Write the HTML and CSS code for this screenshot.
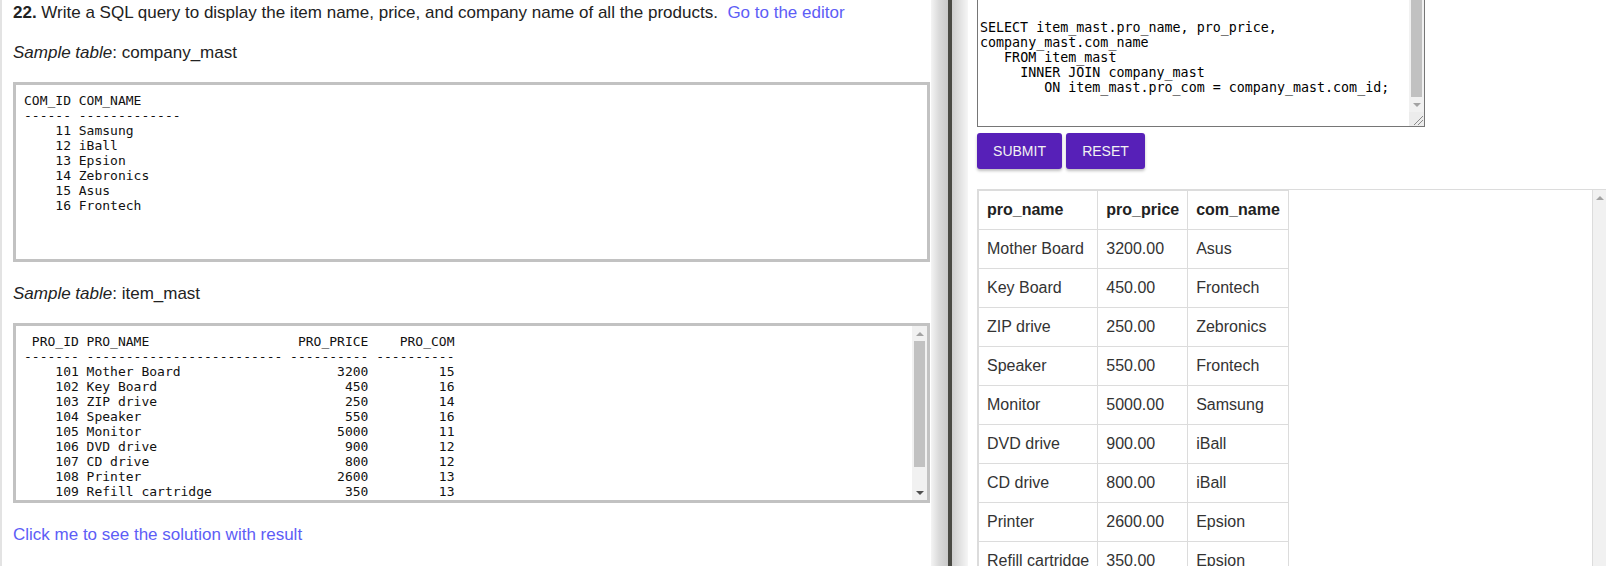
FILE: index.html
```html
<!DOCTYPE html>
<html>
<head>
<meta charset="utf-8">
<link rel="stylesheet" href="styles.css">
</head>
<body>
<div class="page">
  <section class="left">
    <p class="q"><b>22.</b> Write a SQL query to display the item name, price, and company name of all the products. &nbsp;<a class="link">Go to the editor</a></p>
    <p class="sample"><i>Sample table</i>: company_mast</p>
    <div class="box"><pre class="box-text">COM_ID COM_NAME
------ -------------
    11 Samsung
    12 iBall
    13 Epsion
    14 Zebronics
    15 Asus
    16 Frontech</pre></div>
    <p class="sample sample-2"><i>Sample table</i>: item_mast</p>
    <div class="box"><pre class="box-text"> PRO_ID PRO_NAME                   PRO_PRICE    PRO_COM
------- ------------------------- ---------- ----------
    101 Mother Board                    3200         15
    102 Key Board                        450         16
    103 ZIP drive                        250         14
    104 Speaker                          550         16
    105 Monitor                         5000         11
    106 DVD drive                        900         12
    107 CD drive                         800         12
    108 Printer                         2600         13
    109 Refill cartridge                 350         13
    110 Mouse                            250         12</pre><div class="vscroll pre-scroll"><div class="arrow up off"></div><div class="track"><div class="thumb"></div></div><div class="arrow down"></div></div></div>
    <p class="click"><a class="link">Click me to see the solution with result</a></p>
  </section>
  <div class="splitter"><div class="split-line"></div></div>
  <section class="right">
    <div class="editor">
      <div class="code">SELECT item_mast.pro_name, pro_price, company_mast.com_name
   FROM item_mast
     INNER JOIN company_mast
        ON item_mast.pro_com = company_mast.com_id;</div>
      <div class="ed-scroll">
        <div class="ed-track"><div class="ed-thumb"></div></div>
        <div class="arrow down off"></div>
        <div class="resizer"><svg width="14" height="14" viewBox="0 0 14 14"><path d="M13 4 L4 13 M13 8 L8 13" stroke="#8a8a8a" stroke-width="1" fill="none"/></svg></div>
      </div>
    </div>
    <div class="buttons">
      <button class="btn">SUBMIT</button>
      <button class="btn">RESET</button>
    </div>
    <div class="result">
      <div class="result-inner">
        <table class="rtable">
          <tr><th>pro_name</th><th>pro_price</th><th>com_name</th></tr>
          <tr><td>Mother Board</td><td>3200.00</td><td>Asus</td></tr>
          <tr><td>Key Board</td><td>450.00</td><td>Frontech</td></tr>
          <tr><td>ZIP drive</td><td>250.00</td><td>Zebronics</td></tr>
          <tr><td>Speaker</td><td>550.00</td><td>Frontech</td></tr>
          <tr><td>Monitor</td><td>5000.00</td><td>Samsung</td></tr>
          <tr><td>DVD drive</td><td>900.00</td><td>iBall</td></tr>
          <tr><td>CD drive</td><td>800.00</td><td>iBall</td></tr>
          <tr><td>Printer</td><td>2600.00</td><td>Epsion</td></tr>
          <tr><td>Refill cartridge</td><td>350.00</td><td>Epsion</td></tr>
          <tr><td>Mouse</td><td>250.00</td><td>iBall</td></tr>
        </table>
      </div>
      <div class="vscroll res-scroll"><div class="arrow up off"></div><div class="track"></div></div>
    </div>
  </section>
</div>
</body>
</html>
```

FILE: styles.css
```css
* { box-sizing: border-box; }
html, body { margin: 0; padding: 0; }
body {
  width: 1606px;
  height: 566px;
  overflow: hidden;
  background: #fff;
  font-family: "Liberation Sans", Arial, sans-serif;
  color: #222;
}
.page { display: flex; height: 566px; }

/* left pane */
.left {
  width: 931px;
  flex: none;
  border-left: 2px solid #e3e3e3;
  padding: 4px 1px 0 11px;
  font-size: 17px;
  line-height: 18px;
}
.left p { margin: 0; }
.link { color: #5d5df6; text-decoration: none; }
.left .sample { margin-top: 22px; }
.left .sample-2 { margin-top: 23px; }
.left .click { margin-top: 23px; }
.box {
  margin-top: 20px;
  height: 180px;
  border: 3px solid #c2c2c2;
  display: flex;
  overflow: hidden;
}
.box-text {
  flex: 1;
  margin: 0;
  padding: 8px;
  font-family: "DejaVu Sans Mono", monospace;
  font-size: 13px;
  line-height: 15px;
  color: #111;
  overflow: hidden;
}

/* fake scrollbars */
.vscroll {
  width: 15px;
  flex: none;
  background: #f1f1f1;
  display: flex;
  flex-direction: column;
}
.vscroll .track { flex: 1; padding: 0 2px; }
.pre-scroll .track { padding-bottom: 18px; }
.pre-scroll .thumb { height: 126px; background: #c1c1c1; }
.arrow {
  height: 15px;
  flex: none;
  display: flex;
  align-items: center;
  justify-content: center;
}
.arrow::before {
  content: "";
  width: 0;
  height: 0;
  border-left: 4px solid transparent;
  border-right: 4px solid transparent;
}
.arrow.up::before { border-bottom: 4px solid #505050; }
.arrow.down::before { border-top: 4px solid #505050; }
.arrow.up.off::before { border-bottom-color: #a3a3a3; }
.arrow.down.off::before { border-top-color: #a3a3a3; }

/* splitter */
.splitter {
  width: 37px;
  flex: none;
  display: flex;
  background: linear-gradient(to right, #f4f4f4 0, #dadada 8px, #c9c9c9 17px);
}
.split-line {
  margin-left: 17px;
  width: 4px;
  background: #4a4a44;
}
.splitter::after {
  content: "";
  flex: 1;
  background: linear-gradient(to right, #cfcfcf 0, #e2e2e2 8px, #f6f6f6 16px);
}

/* right pane */
.right {
  flex: 1;
  min-width: 0;
  padding-left: 9px;
  display: flex;
  flex-direction: column;
}
.editor {
  width: 448px;
  height: 127px;
  flex: none;
  border: 1px solid #767676;
  border-top: 0;
  display: flex;
}
.code {
  flex: 1;
  padding: 20px 2px 0;
  font-family: "DejaVu Sans Mono", monospace;
  font-size: 13.333px;
  line-height: 15px;
  color: #000;
  white-space: pre-wrap;
  overflow: hidden;
}
.ed-scroll {
  width: 15px;
  flex: none;
  display: flex;
  flex-direction: column;
  background: #f1f1f1;
}
.ed-track { height: 97px; padding: 0 2px; }
.ed-thumb { height: 97px; background: #c1c1c1; }
.resizer { flex: 1; background: #ececec; display: flex; align-items: flex-end; justify-content: flex-end; }
.resizer svg { display: block; }

.buttons { margin-top: 6px; display: flex; gap: 4px; flex: none; }
.btn {
  height: 36px;
  padding: 0 16px;
  border: 0;
  border-radius: 3px;
  background: #5720b8;
  color: #f2f2f2;
  font-family: "Liberation Sans", Arial, sans-serif;
  font-size: 14px;
  box-shadow: 0 2px 3px rgba(0, 0, 0, 0.25);
}
.buttons .btn:first-child { width: 85px; }
.buttons .btn:last-child { width: 79px; }

.result {
  margin-top: 20px;
  flex: 1;
  min-height: 0;
  display: flex;
  border-left: 1px solid #dcdcdc;
  border-top: 1px solid #dcdcdc;
  overflow: hidden;
}
.result-inner { flex: 1; border-right: 1px solid #dcdcdc; overflow: hidden; }
.res-scroll { width: 13px; }
.rtable {
  border-collapse: collapse;
  font-size: 16px;
  line-height: 18px;
  color: #333;
}
.rtable th, .rtable td {
  border: 1px solid #dcdcdc;
  padding: 10px 8px;
  text-align: left;
  white-space: nowrap;
}
.rtable th { font-weight: bold; color: #222; }
```
